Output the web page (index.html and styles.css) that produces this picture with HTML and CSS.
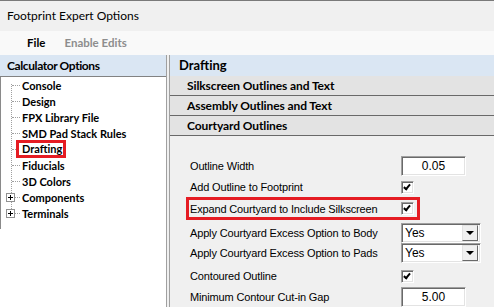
FILE: index.html
```html
<!DOCTYPE html>
<html lang="en">
<head>
    <meta charset="UTF-8">
    <meta name="viewport" content="width=device-width, initial-scale=1.0">
    <title>Footprint Expert Options</title>
    <link rel="stylesheet" href="styles.css">
</head>
<body>
    <div class="titlebar">Footprint Expert Options</div>

    <div class="menubar">
        <span class="menu">File</span>
        <span class="menu disabled">Enable Edits</span>
    </div>

    <div class="main">
        <div class="left">
            <div class="panel-head">Calculator Options</div>
            <div class="tree">
                <ul class="nodes">
                    <li><span class="twig"></span>Console</li>
                    <li><span class="twig"></span>Design</li>
                    <li><span class="twig"></span>FPX Library File</li>
                    <li><span class="twig"></span>SMD Pad Stack Rules</li>
                    <li><span class="twig"></span><span class="marked-node">Drafting</span></li>
                    <li><span class="twig"></span>Fiducials</li>
                    <li><span class="twig"></span>3D Colors</li>
                    <li><span class="twig"><span class="expander"></span></span>Components</li>
                    <li><span class="twig"><span class="expander"></span></span>Terminals</li>
                </ul>
            </div>
        </div>

        <div class="right">
            <div class="panel-head">Drafting</div>
            <div class="bar">Silkscreen Outlines and Text</div>
            <div class="bar">Assembly Outlines and Text</div>
            <div class="bar">Courtyard Outlines</div>

            <div class="form">
                <div class="row r-width">
                    <span class="label">Outline Width</span>
                    <span class="field">0.05</span>
                </div>
                <div class="row r-add">
                    <span class="label">Add Outline to Footprint</span>
                    <span class="check"></span>
                </div>
                <div class="row marked">
                    <span class="label">Expand Courtyard to Include Silkscreen</span>
                    <span class="check"></span>
                </div>
                <div class="row r-body">
                    <span class="label">Apply Courtyard Excess Option to Body</span>
                    <span class="select">Yes<span class="drop"></span></span>
                </div>
                <div class="row r-pads">
                    <span class="label">Apply Courtyard Excess Option to Pads</span>
                    <span class="select">Yes<span class="drop"></span></span>
                </div>
                <div class="row r-contour">
                    <span class="label">Contoured Outline</span>
                    <span class="check"></span>
                </div>
                <div class="row r-gap">
                    <span class="label">Minimum Contour Cut-in Gap</span>
                    <span class="field">5.00</span>
                </div>
            </div>
        </div>
    </div>
</body>
</html>
```

FILE: styles.css
```css
body {
    margin: 0;
    width: 494px;
    height: 307px;
    overflow: hidden;
    font-family: Lato, "Open Sans", sans-serif;
    color: #000;
    background-color: #f0f0f0;
}

.titlebar {
    height: 30px;
    line-height: 30px;
    border-top: 1px solid #7a7a7a;
    padding-left: 7px;
    font-size: 12px;
    background-color: #f0f0f0;
}

.menubar {
    display: flex;
    gap: 19px;
    height: 24px;
    line-height: 24px;
    padding-left: 27px;
    font-size: 11.5px;
    font-weight: 700;
    background-color: #f9f9f9;
}

.menu.disabled {
    color: #8d8d8d;
}

.main {
    display: flex;
    height: 252px;
}

.left {
    display: flex;
    flex-direction: column;
    width: 166px;
    border-right: 1px solid #a0a0a0;
    margin-right: 2px;
}

.panel-head {
    height: 21px;
    line-height: 21px;
    padding-left: 7px;
    font-size: 12px;
    font-weight: 700;
    letter-spacing: -0.4px;
    background-color: #dae6f3;
}

.right .panel-head {
    padding-left: 9px;
    font-size: 13px;
    letter-spacing: 0;
}

.tree {
    flex: 1;
    border-top: 1px solid #828282;
    background-color: #fff;
    background-image: linear-gradient(#8a8a8a, #8a8a8a);
    background-size: 1px 152px;
    background-repeat: no-repeat;
}

.nodes {
    position: relative;
    list-style: none;
    margin: 0;
    padding: 0;
    font-size: 11px;
    font-weight: 700;
}

/* vertical tree connector */
.nodes::before {
    content: "";
    position: absolute;
    left: 11px;
    top: 7px;
    bottom: 8px;
    border-left: 1px dotted #a0a0a0;
}

.nodes li {
    display: flex;
    align-items: center;
    height: 16px;
    white-space: nowrap;
}

.twig {
    position: relative;
    flex: none;
    width: 22px;
    height: 16px;
}

.twig::before {
    content: "";
    position: absolute;
    left: 12px;
    top: 8px;
    width: 8px;
    border-top: 1px dotted #a0a0a0;
}

.expander {
    position: absolute;
    left: 6px;
    top: 4px;
    width: 9px;
    height: 9px;
    box-sizing: border-box;
    border: 1px solid #919191;
    background-color: #fff;
    z-index: 1;
}

.expander::before,
.expander::after {
    content: "";
    position: absolute;
    background-color: #000;
}

.expander::before {
    left: 1px;
    top: 3px;
    width: 5px;
    height: 1px;
}

.expander::after {
    left: 3px;
    top: 1px;
    width: 1px;
    height: 5px;
}

.marked-node {
    margin-left: -6px;
    padding: 0 1px 0 3px;
    line-height: 12px;
    border: 3px solid #e51c23;
    background-color: #fff;
    position: relative;
}

.right {
    flex: 1;
    border-left: 1px solid #a0a0a0;
    background-color: #f0f0f0;
}

.bar {
    height: 19px;
    line-height: 19px;
    padding-left: 17px;
    border-bottom: 1px solid #696969;
    font-size: 12px;
    font-weight: 700;
    letter-spacing: -0.1px;
    background-color: #e3e3e3;
}

.form {
    padding-top: 19px;
    font-family: "Liberation Sans", Arial, sans-serif;
    font-size: 11px;
    letter-spacing: -0.15px;
}

.row {
    display: flex;
    align-items: center;
    height: 20px;
    padding-left: 20px;
    white-space: nowrap;
}

.row .label {
    width: 211px;
    flex: none;
}

.r-width {
    height: 22px;
}

.row.marked {
    box-sizing: border-box;
    width: 234px;
    height: 23px;
    margin-left: 16px;
    padding-left: 1px;
    border: 3px solid #e51c23;
}

.r-body {
    margin-top: 3px;
}

.r-contour {
    margin-top: 2px;
    height: 22px;
}

.field,
.select,
.check {
    box-sizing: border-box;
    background-color: #fff;
    border: 1px solid;
    border-color: #a0a0a0 #fff #fff #a0a0a0;
    box-shadow: inset 1px 1px 0 #696969, inset -1px -1px 0 #e3e3e3;
}

.field {
    width: 65px;
    height: 20px;
    line-height: 18px;
    text-align: center;
    font-size: 12px;
    letter-spacing: 0;
}

.check {
    position: relative;
    width: 13px;
    height: 13px;
}

/* check mark */
.check::after {
    content: "";
    position: absolute;
    left: 3px;
    top: 1px;
    width: 2px;
    height: 5px;
    border: solid #000;
    border-width: 0 2px 2px 0;
    transform: rotate(40deg);
}

.select {
    display: flex;
    align-items: center;
    justify-content: space-between;
    width: 80px;
    height: 20px;
    padding: 0 2px 0 3px;
    font-size: 12px;
    letter-spacing: 0;
}

.drop {
    position: relative;
    box-sizing: border-box;
    width: 16px;
    height: 16px;
    background-color: #f0f0f0;
    border: 1px solid;
    border-color: #e3e3e3 #696969 #696969 #e3e3e3;
}

.drop::after {
    content: "";
    position: absolute;
    left: 3px;
    top: 5px;
    border-left: 4px solid transparent;
    border-right: 4px solid transparent;
    border-top: 4px solid #000;
}
```
